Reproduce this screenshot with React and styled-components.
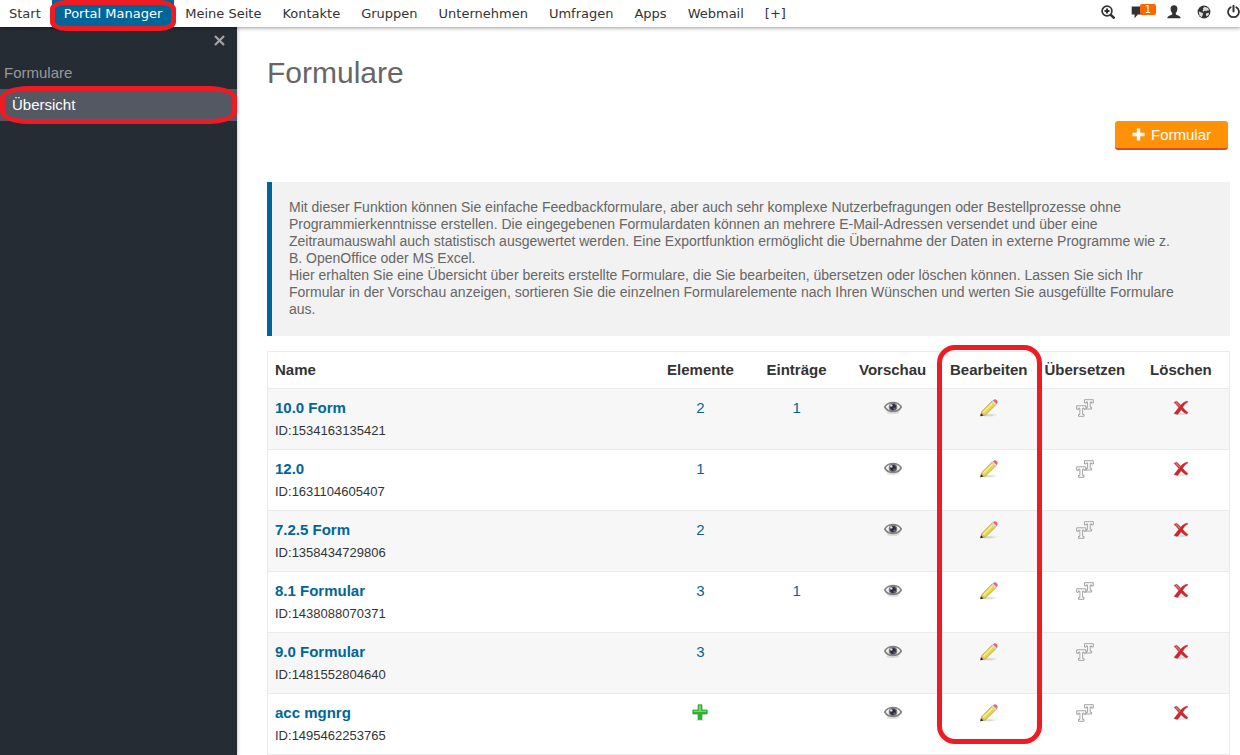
import React from 'react';
import styled, { createGlobalStyle, css } from 'styled-components';

const colors = {
  primary: '#006699',
  dark: '#262c34',
  darkActive: '#535863',
  text: '#333333',
  muted: '#666666',
  border: '#ebebeb',
  stripe: '#f7f7f7',
  marker: '#ed1c24',
  orange: '#ff9207',
};

const navItems = [
  'Start',
  'Portal Manager',
  'Meine Seite',
  'Kontakte',
  'Gruppen',
  'Unternehmen',
  'Umfragen',
  'Apps',
  'Webmail',
  '[+]',
];

const forms = [
  { id: '1534163135421', name: '10.0 Form', elements: 2, entries: 1 },
  { id: '1631104605407', name: '12.0', elements: 1 },
  { id: '1358434729806', name: '7.2.5 Form', elements: 2 },
  { id: '1438088070371', name: '8.1 Formular', elements: 3, entries: 1 },
  { id: '1481552804640', name: '9.0 Formular', elements: 3 },
  { id: '1495462253765', name: 'acc mgnrg' },
];

/* toolbar icons */

const SearchIcon = () => (
  <svg width="14" height="14" viewBox="0 0 14 14" fill="none" stroke="#333">
    <circle cx="6" cy="6" r="4.9" strokeWidth="1.7" />
    <path d="M9.8 9.8L12.7 12.7" strokeWidth="2.6" strokeLinecap="round" />
    <path d="M6 3.5V8.5M3.5 6H8.5" strokeWidth="2" />
  </svg>
);

const CommentIcon = () => (
  <svg width="14" height="14" viewBox="0 0 14 14" fill="#333">
    <path d="M0.7 1.5H12.3V9.5H6.8L3.6 13.2V9.5H0.7Z" />
  </svg>
);

const UserIcon = () => (
  <svg width="14" height="14" viewBox="0 0 14 14" fill="#333">
    <path d="M7 0.3C9.2 0.3 10.6 1.8 10.4 4.1C10.3 5.9 9.7 7.1 8.8 8V9.3C9.1 10.3 13.5 10.4 13.7 13.3H0.3C0.5 10.4 4.9 10.3 5.2 9.3V8C4.3 7.1 3.7 5.9 3.6 4.1C3.4 1.8 4.8 0.3 7 0.3Z" />
  </svg>
);

const GlobeIcon = () => (
  <svg width="14" height="14" viewBox="0 0 14 14">
    <circle cx="7" cy="7" r="6.4" fill="#333" />
    <path d="M7.6 1.8L11 2.9L12.3 5.6L10.6 5.2L9.3 6.2L8 5.5L6.5 6.8L5.4 5.8L6.4 4.5L5.8 3.2Z" fill="#ddd" />
    <path d="M1.7 6.4L4.4 7.5L6.2 8.6L5.5 10.5L4.6 12.2L2.5 10.6Z" fill="#ddd" />
    <path d="M9.3 8.2L12.1 7.7L11.4 10.2L9.6 11.4L8.8 9.8Z" fill="#ddd" />
  </svg>
);

const PowerIcon = () => (
  <svg width="13" height="14" viewBox="0 0 13 14" fill="none" stroke="#333" strokeLinecap="round">
    <path d="M3.7 2.2A5.4 5.4 0 1 0 9.3 2.2" strokeWidth="1.8" />
    <path d="M6.5 0.9V6.6" strokeWidth="2" />
  </svg>
);

/* table icons */

const EyeIcon = () => (
  <svg width="18" height="16" viewBox="0 -1.5 18 16">
    <ellipse cx="9" cy="11" rx="6.5" ry="1.6" fill="#000" opacity=".1" />
    <path d="M0.7 5.5C2.6 2.2 5.4 1 9 1S15.4 2.2 17.3 5.5C15.4 8.8 12.6 10 9 10S2.6 8.8 0.7 5.5Z" fill="#f4f4f4" stroke="#858585" strokeWidth="1.7" />
    <circle cx="9" cy="5.4" r="4.3" fill="#77787c" />
    <circle cx="9" cy="5.5" r="2.9" fill="#2c2b3d" />
    <circle cx="7.3" cy="3.9" r="1.2" fill="#e4e4e4" />
    <circle cx="10.4" cy="7.2" r="1.1" fill="#686580" />
  </svg>
);

const PencilIcon = () => (
  <svg width="18" height="18" viewBox="0 0 18 18">
    <ellipse cx="9" cy="16" rx="8" ry="1.6" fill="#000" opacity=".05" />
    <ellipse cx="7.5" cy="16.2" rx="6" ry="1" fill="#000" opacity=".09" />
    <path d="M0.7 16.8L1.8 12.6L12.4 1.8L16.1 5.5L5.4 15.9Z" fill="#e8d54a" stroke="#a69432" strokeWidth=".7" />
    <path d="M2.7 13L13 2.6L14.1 3.7L3.8 14.1Z" fill="#f7ec94" />
    <path d="M0.7 16.8L1.8 12.6L5.4 15.9Z" fill="#d9bb80" />
    <path d="M0.3 17.3L1 14.3L3.4 16.6Z" fill="#222" />
    <path d="M11.6 2.9L13.3 1.2L16.8 4.7L15.1 6.4Z" fill="#dcdcdc" stroke="#bbb" strokeWidth=".5" />
    <path d="M13.1 1.4C14.1 0.1 15.6 0 16.8 1.2C18 2.4 17.9 3.8 16.7 4.9Z" fill="#e9646b" />
  </svg>
);

const TranslateIcon = () => (
  <svg width="18" height="18" viewBox="0 0 18 18" fill="#fdfdfd" stroke="#999" strokeWidth=".9" strokeLinejoin="round">
    <path d="M8.5 0.7H17.3V4H15.5V2.9H14.2V8.3H15.6V10H10.2V8.3H11.6V2.9H10.3V4H8.5Z" />
    <path d="M0.7 6.8H9.8V10.3H8V9.1H6.6V15.4H8V17.3H2.5V15.4H3.9V9.1H2.5V10.3H0.7Z" />
  </svg>
);

const DeleteIcon = () => (
  <svg width="16" height="16" viewBox="0 0 16 16">
    <ellipse cx="8" cy="14" rx="7" ry="1.2" fill="#000" opacity=".1" />
    <path d="M1 2.3L3.7 1.3C5.1 2.3 6.4 3.6 7.7 5.2C9.3 3.3 11.3 1.7 14.2 1L14.9 2C12.4 3.4 11 5.1 9.7 7.3C11.2 9.1 12.8 10.8 15 12.6L13.8 14C11.4 13.1 9.7 11.6 8 9.8C6.7 11.8 5.7 13.6 4.4 14.4L1 13.4C2.6 11.7 4.2 9.6 5.7 7.6C4.3 5.8 2.8 3.9 1 2.3Z" fill="#c9282d" stroke="#a83a3c" strokeWidth=".4" />
    <path d="M2.3 2.5L3.6 2C5 3.1 6.2 4.6 7.5 6.2L6.7 7.1C5.3 5.4 3.9 3.8 2.3 2.5Z" fill="#e2777a" />
  </svg>
);

const AddIcon = () => (
  <svg width="16" height="17" viewBox="0 0 16 17">
    <ellipse cx="8" cy="16" rx="4" ry=".8" fill="#000" opacity=".16" />
    <path d="M6 0.8H10V6H15.2V10H10V15.4H6V10H0.8V6H6Z" fill="#2fb52f" stroke="#2a9a35" strokeWidth=".7" />
    <path d="M6.8 1.6H9V6.8H14.3V7.9H1.7V6.8H6.8Z" fill="#6bdb68" />
  </svg>
);

const PlusIcon = () => (
  <svg width="13" height="13" viewBox="0 0 13 13" fill="#fff">
    <path d="M4.8 0.5H8.2V4.8H12.5V8.2H8.2V12.5H4.8V8.2H0.5V4.8H4.8Z" />
  </svg>
);

const CloseIcon = () => (
  <svg width="11" height="11" viewBox="0 0 11 11" stroke="#a3a5a8" strokeWidth="2.2">
    <path d="M1 1L10 10M10 1L1 10" />
  </svg>
);

function Header() {
  return (
    <TopBar>
      <Nav aria-label="Hauptnavigation">
        {navItems.map((item) => (
          <NavLink key={item} href="#" $active={item === 'Portal Manager'}>
            {item}
            {item === 'Portal Manager' && <NavMarker />}
          </NavLink>
        ))}
      </Nav>

      <Tools>
        <ToolButton aria-label="Suche"><SearchIcon /></ToolButton>
        <ToolButton aria-label="Nachrichten" $wide>
          <CommentIcon />
          <Badge>1</Badge>
        </ToolButton>
        <ToolButton aria-label="Profil"><UserIcon /></ToolButton>
        <ToolButton aria-label="Sprache"><GlobeIcon /></ToolButton>
        <ToolButton aria-label="Abmelden"><PowerIcon /></ToolButton>
      </Tools>
    </TopBar>
  );
}

function FormRow({ form }) {
  return (
    <tr>
      <Cell>
        <FormLink href="#">{form.name}</FormLink>
        <FormId>ID:{form.id}</FormId>
      </Cell>
      <Cell $center>
        {form.elements
          ? <CountLink href="#">{form.elements}</CountLink>
          : <IconLink href="#" aria-label="Element hinzufügen"><AddIcon /></IconLink>}
      </Cell>
      <Cell $center>{form.entries && <CountLink href="#">{form.entries}</CountLink>}</Cell>
      <Cell $center><IconLink href="#" aria-label="Vorschau"><EyeIcon /></IconLink></Cell>
      <Cell $center><IconLink href="#" aria-label="Bearbeiten"><PencilIcon /></IconLink></Cell>
      <Cell $center><IconLink href="#" aria-label="Übersetzen"><TranslateIcon /></IconLink></Cell>
      <Cell $center><IconLink href="#" aria-label="Löschen"><DeleteIcon /></IconLink></Cell>
    </tr>
  );
}

function App() {
  return (
    <Page>
      <GlobalStyle />
      <Header />

      <Layout>
        <Sidebar>
          <CloseButton aria-label="Menü schließen"><CloseIcon /></CloseButton>
          <SidebarTitle>Formulare</SidebarTitle>
          <SidebarLink href="#">
            Übersicht
            <SidebarMarker />
          </SidebarLink>
        </Sidebar>

        <Content>
          <Title>Formulare</Title>

          <Actions>
            <AddButton type="button">
              <PlusIcon />
              Formular
            </AddButton>
          </Actions>

          <Info>
            <p>
              Mit dieser Funktion können Sie einfache Feedbackformulare, aber auch sehr komplexe Nutzerbefragungen oder Bestellprozesse ohne Programmierkenntnisse erstellen. Die eingegebenen Formulardaten können an mehrere E-Mail-Adressen versendet und über eine Zeitraumauswahl auch statistisch ausgewertet werden. Eine Exportfunktion ermöglicht die Übernahme der Daten in externe Programme wie z. B. OpenOffice oder MS Excel.
            </p>
            <p>
              Hier erhalten Sie eine Übersicht über bereits erstellte Formulare, die Sie bearbeiten, übersetzen oder löschen können. Lassen Sie sich Ihr Formular in der Vorschau anzeigen, sortieren Sie die einzelnen Formularelemente nach Ihren Wünschen und werten Sie ausgefüllte Formulare aus.
            </p>
          </Info>

          <TableWrapper>
            <Table>
              <thead>
                <tr>
                  <HeadCell $name>Name</HeadCell>
                  <HeadCell>Elemente</HeadCell>
                  <HeadCell>Einträge</HeadCell>
                  <HeadCell>Vorschau</HeadCell>
                  <HeadCell>Bearbeiten</HeadCell>
                  <HeadCell>Übersetzen</HeadCell>
                  <HeadCell>Löschen</HeadCell>
                </tr>
              </thead>
              <tbody>
                {forms.map((form) => <FormRow key={form.id} form={form} />)}
              </tbody>
            </Table>
            <ColumnMarker />
          </TableWrapper>
        </Content>
      </Layout>
    </Page>
  );
}

const GlobalStyle = createGlobalStyle`
  * { box-sizing: border-box; }

  body {
    margin: 0;

    background: #fff;
    color: ${colors.text};
    font: 15px/17px "Liberation Sans", Arial, sans-serif;
  }

  h1, h2, p { margin: 0; }

  a { text-decoration: none; }

  button {
    padding: 0;

    background: none;
    border: 0;
    font: inherit;
    cursor: pointer;
  }

  svg { display: block; }
`;

const Page = styled.div`
  display: flex;
  flex-direction: column;
  min-height: 100vh;
`;

const TopBar = styled.header`
  position: relative;
  z-index: 1;

  display: flex;
  justify-content: space-between;
  height: 27px;

  background: #fff;
  box-shadow: 0 1px 4px rgba(0, 0, 0, .4);
`;

const Nav = styled.nav`
  display: flex;
  gap: 1px;
  margin-left: -1px;
`;

const NavLink = styled.a`
  position: relative;

  padding: 0 10px;

  color: ${colors.text};
  font: 13px/27px "DejaVu Sans", Verdana, sans-serif;
  white-space: nowrap;

  ${({ $active }) => $active && css`
    padding: 0 12px;

    background: ${colors.primary};
    color: #fff;
  `}
`;

/* red highlight frames */
const Marker = styled.span`
  position: absolute;

  border: 5px solid ${colors.marker};
  pointer-events: none;
`;

const NavMarker = styled(Marker)`
  inset: 0 -2px -4px;

  border-radius: 16px / 9px;
`;

const SidebarMarker = styled(Marker)`
  inset: -3px 0 -3px;

  border-radius: 28px / 12px;
`;

const ColumnMarker = styled(Marker)`
  top: -6px;
  bottom: 11px;
  left: calc(70% - 4px);

  width: calc(10% + 9px);

  border-radius: 18px;
`;

const Tools = styled.div`
  display: flex;
  align-items: center;
  gap: 16px;
  padding-bottom: 3px;
`;

const ToolButton = styled.button`
  position: relative;

  width: ${({ $wide }) => ($wide ? '20px' : 'auto')};
`;

const Badge = styled.span`
  position: absolute;
  top: -1px;
  left: 9px;

  width: 16px;

  background: #ff6600;
  border-radius: 2px;
  color: #fff;
  font: 10px/11px "DejaVu Sans", Verdana, sans-serif;
  text-align: center;
`;

const Layout = styled.div`
  display: flex;
  flex: 1;
`;

const Sidebar = styled.aside`
  display: flex;
  flex: 0 0 237px;
  flex-direction: column;

  background: ${colors.dark};
  box-shadow: 0 0 4px rgba(0, 0, 0, .3);
`;

const CloseButton = styled.button`
  align-self: flex-end;
  margin: 8px 12px 18px;
`;

const SidebarTitle = styled.h2`
  padding: 0 4px 8px;

  color: #979a9d;
  font-size: 15px;
  font-weight: 400;
  line-height: 17px;
`;

const SidebarLink = styled.a`
  position: relative;

  padding: 0 12px;

  background: ${colors.darkActive};
  color: #fff;
  line-height: 32px;
`;

const Content = styled.main`
  flex: 1;
  min-width: 0;
  padding: 29px 10px 0 30px;
`;

const Title = styled.h1`
  color: ${colors.muted};
  font-size: 30px;
  font-weight: 400;
  line-height: 34px;
`;

const Actions = styled.div`
  display: flex;
  justify-content: flex-end;
  padding: 31px 2px 32px;
`;

const AddButton = styled.button`
  display: flex;
  align-items: center;
  gap: 6px;
  padding: 5px 17px;

  background: ${colors.orange};
  border-bottom: 2px solid #d94a26;
  border-radius: 3px;
  color: #fff;
`;

const Info = styled.section`
  margin-bottom: 15px;
  padding: 17px 51px 18px 17px;

  background: #f2f2f2;
  border-left: 5px solid ${colors.primary};
  color: ${colors.muted};
  font-size: 14px;
`;

const TableWrapper = styled.div`
  position: relative;
`;

const Table = styled.table`
  width: 100%;

  border: 1px solid ${colors.border};
  border-spacing: 0;
  table-layout: fixed;

  tbody tr:nth-child(odd) { background: ${colors.stripe}; }
`;

const HeadCell = styled.th`
  width: ${({ $name }) => ($name ? '40%' : '10%')};
  padding: ${({ $name }) => ($name ? '9px 7px 10px' : '9px 0 10px')};

  text-align: ${({ $name }) => ($name ? 'left' : 'center')};
`;

const Cell = styled.td`
  padding: 10px 7px 11px;

  border-top: 1px solid ${colors.border};
  text-align: ${({ $center }) => ($center ? 'center' : 'left')};
  vertical-align: top;
`;

const FormLink = styled.a`
  color: ${colors.primary};
  font-weight: 700;
`;

const FormId = styled.div`
  margin-top: 7px;

  font-size: 13px;
  line-height: 15px;
`;

const CountLink = styled.a`
  color: ${colors.primary};
`;

const IconLink = styled.a`
  display: flex;
  align-items: center;
  justify-content: center;
  height: 17px;
`;

export default App;
